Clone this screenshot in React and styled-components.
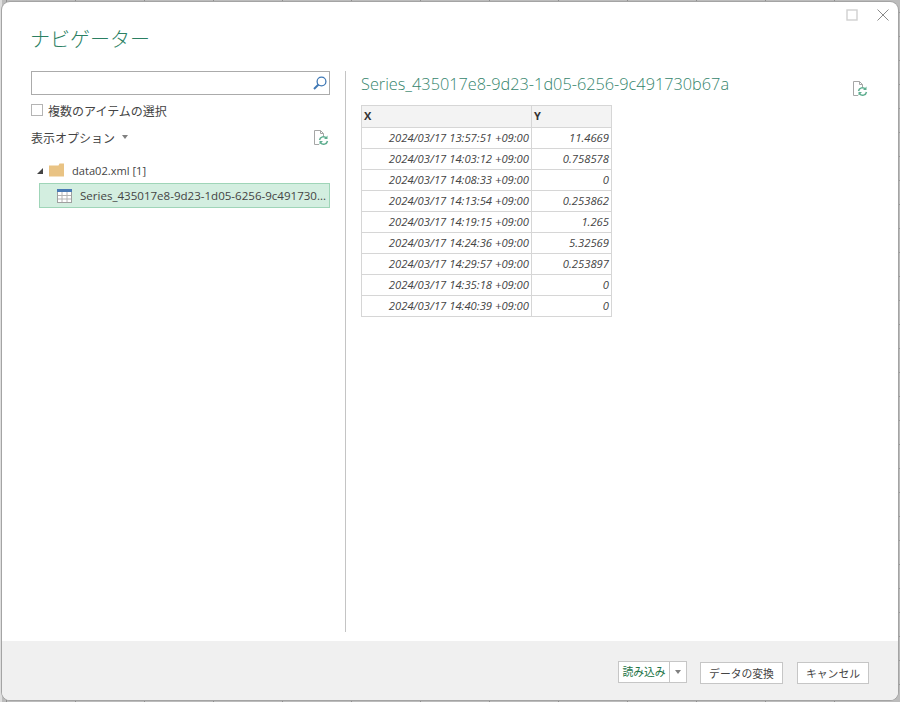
import React from "react";
import styled, { createGlobalStyle } from "styled-components";

const Global = createGlobalStyle`
  html, body { margin: 0; padding: 0; background: #fff; }
  * { box-sizing: border-box; }
  body { font-family: "Open Sans", "Noto Sans CJK JP", sans-serif; }
`;

const Backdrop = styled.div`
  width: 900px;
  height: 702px;
  padding: 2px;
  overflow: hidden;
  background:
    linear-gradient(to right, #dedede 0 2px, transparent 2px),
    repeating-linear-gradient(to right, transparent 0 6px, #8f8f8f 6px 7px, transparent 7px 69px),
    repeating-linear-gradient(to bottom, transparent 0 12px, #9a9a9a 12px 13px, transparent 13px 24px),
    #bcbcbc;
`;

const Dialog = styled.div`
  width: 896px;
  height: 698px;
  display: flex;
  flex-direction: column;
  background: #fff;
  border-radius: 8px;
  box-shadow: 0 0 0 1px #a4a4a4;
  overflow: hidden;
`;

const TitleBar = styled.div`
  height: 22px;
  display: flex;
  justify-content: flex-end;
  align-items: center;
  gap: 19px;
  padding: 3px 9px 0 0;
  flex: none;
`;

const WindowIcon = styled.svg`
  width: 12px;
  height: 12px;
  display: block;
`;

const Title = styled.h1`
  margin: 0;
  padding: 1px 0 0 28px;
  height: 47px;
  flex: none;
  font-size: 20px;
  line-height: 28px;
  font-weight: 300;
  color: #2b7f62;
  font-family: "Noto Sans CJK JP", sans-serif;
`;

const Main = styled.div`
  flex: 1;
  display: flex;
  min-height: 0;
  padding: 0 0 9px 29px;
`;

const LeftPane = styled.div`
  width: 299px;
  flex: none;
  display: flex;
  flex-direction: column;
`;

const SearchBox = styled.div`
  height: 24px;
  border: 1px solid #ababab;
  display: flex;
  justify-content: flex-end;
  align-items: center;
  padding-right: 1px;
`;

const CheckRow = styled.label`
  display: flex;
  align-items: center;
  gap: 5px;
  height: 20px;
  margin-top: 5px;
  font-size: 12px;
  color: #444;
  font-family: "Noto Sans CJK JP", sans-serif;
`;

const CheckBox = styled.span`
  width: 12px;
  height: 12px;
  border: 1px solid #b4b4b4;
  background: #fff;
`;

const OptionsRow = styled.div`
  display: flex;
  align-items: center;
  justify-content: space-between;
  height: 24px;
  margin-top: 5px;
  padding-right: 1px;
`;

const OptionsLabel = styled.div`
  display: flex;
  align-items: center;
  gap: 7px;
  font-size: 12px;
  color: #444;
  font-family: "Noto Sans CJK JP", sans-serif;
`;

const Caret = styled.span`
  width: 0;
  height: 0;
  border-left: 3.5px solid transparent;
  border-right: 3.5px solid transparent;
  border-top: 4px solid #808080;
`;

const Tree = styled.div`
  margin-top: 10px;
  padding-left: 8px;
`;

const FolderRow = styled.div`
  display: flex;
  align-items: center;
  height: 22px;
  font-size: 11.1px;
  color: #444;
`;

const Expander = styled.span`
  width: 0;
  height: 0;
  margin: 1px 5px 0 -2px;
  border-bottom: 6px solid #444;
  border-left: 6px solid transparent;
`;

const FolderIcon = styled.svg`
  width: 17px;
  height: 14px;
  flex: none;
  margin-right: 7px;
`;

const FileRow = styled.div`
  display: flex;
  align-items: center;
  gap: 8px;
  height: 25px;
  margin-top: 2px;
  padding-left: 17px;
  background: #d3eee0;
  border: 1px solid #9fd5b8;
  font-size: 11.55px;
  color: #444;
  white-space: nowrap;
  overflow: hidden;
`;

const TableIcon = styled.svg`
  width: 15px;
  height: 14px;
  flex: none;
`;

const Divider = styled.div`
  width: 1px;
  flex: none;
  margin: 0 15px;
  background: #c4c4c4;
`;

const RightPane = styled.div`
  flex: 1;
  display: flex;
  flex-direction: column;
  min-width: 0;
  padding-right: 29px;
`;

const PreviewHeader = styled.div`
  display: flex;
  justify-content: space-between;
  align-items: flex-start;
  height: 34px;
`;

const PreviewTitle = styled.div`
  font-size: 16.3px;
  line-height: 26px;
  font-weight: 300;
  color: #35856d;
  white-space: nowrap;
`;

const RefreshSlot = styled.div`
  margin: 9px 1px 0 0;
`;

const Table = styled.table`
  border-collapse: collapse;
  table-layout: fixed;
  width: 250px;
  font-size: 11.25px;
  color: #444;
`;

const Head = styled.th`
  height: 22px;
  padding: 0 2px 2px;
  background: #f3f3f3;
  border: 1px solid #d6d6d6;
  text-align: left;
  font-size: 11px;
  font-weight: 700;
  color: #333;
  width: ${p => p.$w}px;
`;

const Cell = styled.td`
  height: 21px;
  padding: 0 2px 2px;
  border: 1px solid #d6d6d6;
  text-align: right;
  font-style: italic;
  white-space: nowrap;
`;

const Footer = styled.div`
  height: 59px;
  flex: none;
  display: flex;
  align-items: center;
  justify-content: flex-end;
  gap: 14px;
  padding: 4px 29px 0 0;
  background: #f0f0f0;
`;

const SplitButton = styled.div`
  display: flex;
  height: 22px;
  border: 1px solid #c6c6c6;
  background: #fff;
  margin: -1px -1px 0 0;
`;

const SplitMain = styled.span`
  width: 51px;
  border-right: 1px solid #c6c6c6;
  font-size: 10.8px;
  line-height: 19px;
  text-align: center;
  color: #217346;
  font-family: "Noto Sans CJK JP", sans-serif;
`;

const SplitArrow = styled.span`
  width: 16px;
  display: flex;
  align-items: center;
  justify-content: center;
`;

const Button = styled.button`
  height: 22px;
  width: ${p => p.$w}px;
  padding: 0;
  border: 1px solid #c6c6c6;
  background: #fff;
  font-size: 10.8px;
  color: #444;
  font-family: "Noto Sans CJK JP", sans-serif;
`;

const Refresh = () => (
  <svg width="16" height="17" viewBox="0 0 16 17" fill="none">
    <path d="M1.5 15.5V1.5H7.5L10.5 4.5V7M7.5 1.5V4.5H10.5M1.5 15.5H6" stroke="#a6a6a6" />
    <path d="M6.5 11A4 4 0 0 1 13.5 9.2M14.5 12A4 4 0 0 1 7.5 13.8" stroke="#5fae90" strokeWidth="1.5" />
    <path d="M14.5 6.5V10H11ZM6.5 15.5V12H10Z" fill="#5fae90" />
  </svg>
);

const rows = [
  ["2024/03/17 13:57:51 +09:00", "11.4669"],
  ["2024/03/17 14:03:12 +09:00", "0.758578"],
  ["2024/03/17 14:08:33 +09:00", "0"],
  ["2024/03/17 14:13:54 +09:00", "0.253862"],
  ["2024/03/17 14:19:15 +09:00", "1.265"],
  ["2024/03/17 14:24:36 +09:00", "5.32569"],
  ["2024/03/17 14:29:57 +09:00", "0.253897"],
  ["2024/03/17 14:35:18 +09:00", "0"],
  ["2024/03/17 14:40:39 +09:00", "0"],
];

export default function App() {
  return (
    <Backdrop>
      <Global />
      <Dialog>
        <TitleBar>
          <WindowIcon viewBox="0 0 12 12" fill="none">
            <rect x="1" y="1" width="10" height="10" stroke="#d0d0d0" strokeWidth="1.4" />
          </WindowIcon>
          <WindowIcon viewBox="0 0 12 12" fill="none">
            <path d="M.5.5L11.5 11.5M11.5.5L.5 11.5" stroke="#8a8a8a" />
          </WindowIcon>
        </TitleBar>
        <Title>ナビゲーター</Title>
        <Main>
          <LeftPane>
            <SearchBox>
              <svg width="16" height="16" viewBox="0 0 16 16" fill="none">
                <circle cx="9.5" cy="6.5" r="4.4" stroke="#3f78b5" strokeWidth="1.3" />
                <path d="M6.5 9.5L2 14" stroke="#3f78b5" strokeWidth="2" />
              </svg>
            </SearchBox>
            <CheckRow><CheckBox />複数のアイテムの選択</CheckRow>
            <OptionsRow>
              <OptionsLabel>表示オプション<Caret /></OptionsLabel>
              <Refresh />
            </OptionsRow>
            <Tree>
              <FolderRow>
                <Expander />
                <FolderIcon viewBox="0 0 17 14">
                  <path d="M1 13.5V2.5H10.5L11.5 .5H16V13.5Z" fill="#e9c384" />
                </FolderIcon>
                data02.xml [1]
              </FolderRow>
              <FileRow>
                <TableIcon viewBox="0 0 15 14" fill="none">
                  <rect x=".5" y=".5" width="14" height="13" fill="#fff" stroke="#a0a0a0" />
                  <rect x="0" y="0" width="15" height="3" fill="#4a7ab5" />
                  <path d="M5 3V13M10 3V13M1 6.5H14M1 10H14" stroke="#b4b4b4" />
                </TableIcon>
                Series_435017e8-9d23-1d05-6256-9c491730...
              </FileRow>
            </Tree>
          </LeftPane>
          <Divider />
          <RightPane>
            <PreviewHeader>
              <PreviewTitle>Series_435017e8-9d23-1d05-6256-9c491730b67a</PreviewTitle>
              <RefreshSlot><Refresh /></RefreshSlot>
            </PreviewHeader>
            <Table>
              <thead>
                <tr><Head $w={170}>X</Head><Head $w={80}>Y</Head></tr>
              </thead>
              <tbody>
                {rows.map(r => (
                  <tr key={r[0]}><Cell>{r[0]}</Cell><Cell>{r[1]}</Cell></tr>
                ))}
              </tbody>
            </Table>
          </RightPane>
        </Main>
        <Footer>
          <SplitButton>
            <SplitMain>読み込み</SplitMain>
            <SplitArrow><Caret /></SplitArrow>
          </SplitButton>
          <Button $w={83}>データの変換</Button>
          <Button $w={72}>キャンセル</Button>
        </Footer>
      </Dialog>
    </Backdrop>
  );
}
